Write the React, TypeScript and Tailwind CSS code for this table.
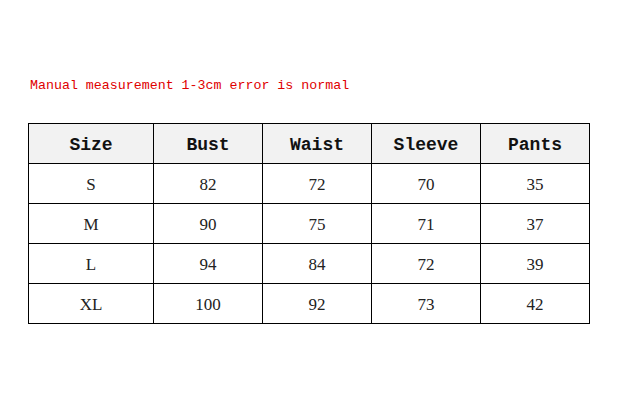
const headers = ['Size', 'Bust', 'Waist', 'Sleeve', 'Pants'];

const rows = [
  ['S', '82', '72', '70', '35'],
  ['M', '90', '75', '71', '37'],
  ['L', '94', '84', '72', '39'],
  ['XL', '100', '92', '73', '42'],
];

const widths = ['w-[125px]', 'w-[109px]', 'w-[109px]', 'w-[109px]', 'w-[109px]'];

export default function App() {
  return (
    <div className="w-[630px] h-[420px] bg-white pt-[77px] pl-[28px]" style={{ fontFamily: '"Liberation Mono", "DejaVu Sans Mono", monospace' }}>
      <p className="ml-[2px] text-[13.3px] leading-[18px] text-[#e00000]">
        Manual measurement 1-3cm error is normal
      </p>
      <table className="mt-[28px] border-collapse border border-black">
        <thead>
          <tr className="bg-[#f2f2f2]">
            {headers.map((h, i) => (
              <th key={h} className={`${widths[i]} h-[40px] border border-black p-0 pt-[3px] text-center text-[18px] font-bold text-[#111]`}>
                {h}
              </th>
            ))}
          </tr>
        </thead>
        <tbody>
          {rows.map((r) => (
            <tr key={r[0]}>
              {r.map((c, i) => (
                <td
                  key={i}
                  className={`${widths[i]} h-[40px] border border-black p-0 pt-[2px] text-center text-[17px] text-[#222]`}
                  style={{ fontFamily: '"Liberation Serif", serif' }}
                >
                  {c}
                </td>
              ))}
            </tr>
          ))}
        </tbody>
      </table>
    </div>
  );
}
